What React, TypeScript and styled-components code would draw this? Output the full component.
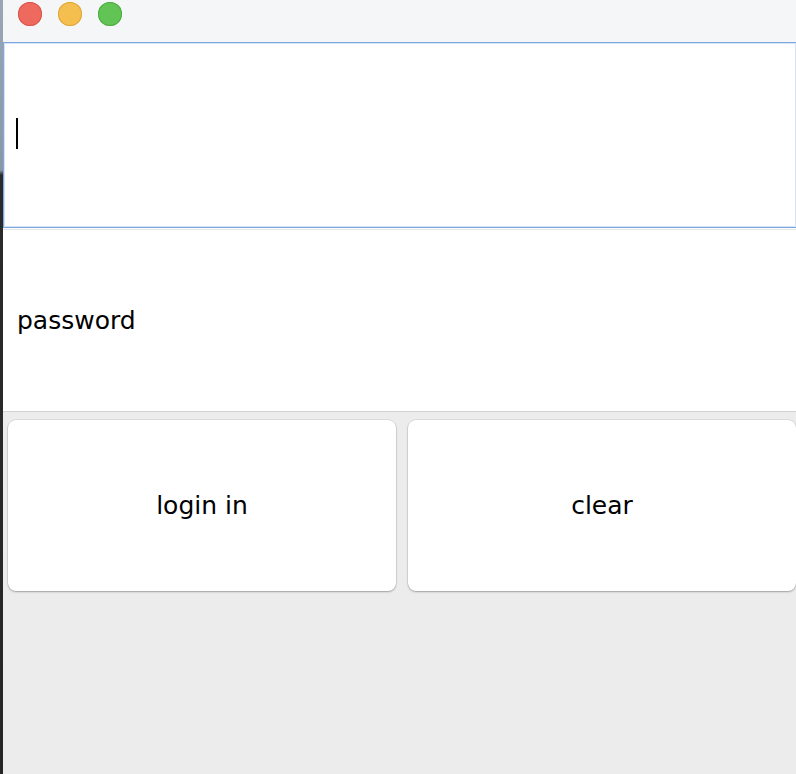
import React from "react";
import styled, { createGlobalStyle } from "styled-components";

const Global = createGlobalStyle`
  html, body { margin: 0; padding: 0; }
  body { width: 796px; height: 774px; overflow: hidden; background: #ececec; font-family: "DejaVu Sans", "Liberation Sans", sans-serif; }
`;

const Screen = styled.div`
  display: flex;
  width: 796px;
  height: 774px;
  overflow: hidden;
`;

const LeftEdge = styled.div`
  width: 3px;
  flex: none;
  background: linear-gradient(to bottom, #9aa6b4 0px, #8d97a3 170px, #2b2b2b 175px, #262626 100%);
`;

const Window = styled.div`
  flex: 1;
  display: flex;
  flex-direction: column;
  background: #ececec;
  min-width: 0;
`;

const TitleBar = styled.div`
  height: 42px;
  flex: none;
  display: flex;
  align-items: flex-start;
  gap: 16px;
  padding: 2px 0 0 15px;
  background: #f5f6f8;
  box-sizing: border-box;
`;

const Light = styled.span<{ $fill: string; $edge: string }>`
  width: 24px;
  height: 24px;
  border-radius: 50%;
  background: ${(p) => p.$fill};
  box-shadow: inset 0 0 0 1px ${(p) => p.$edge};
  flex: none;
`;

const UserField = styled.div`
  height: 186px;
  flex: none;
  box-sizing: border-box;
  border: 1px solid #7ca8dd;
  border-right: none;
  box-shadow: inset 0 0 0 1px #d4e3f5;
  background: #ffffff;
  display: flex;
  align-items: center;
  padding-left: 12px;
`;

const Caret = styled.span`
  width: 2px;
  height: 31px;
  background: #000;
  margin-top: -3px;
`;

const Divider = styled.div<{ $color: string; $h: number }>`
  height: ${(p) => p.$h}px;
  flex: none;
  background: ${(p) => p.$color};
`;

const PasswordField = styled.div`
  height: 181px;
  flex: none;
  background: #ffffff;
  display: flex;
  align-items: center;
  padding-left: 14px;
  font-size: 25px;
  color: #000;
`;

const ButtonPanel = styled.div`
  flex: 1;
  display: flex;
  gap: 12px;
  padding: 8px 0 0 5px;
  background: #ececec;
  border-top: 1px solid #d2d2d2;
  align-items: flex-start;
`;

const Button = styled.button`
  width: 388px;
  height: 171px;
  flex: none;
  border: none;
  border-radius: 8px;
  background: #ffffff;
  box-shadow: 0 0 0 0.5px rgba(0, 0, 0, 0.12), 0 1px 2px rgba(0, 0, 0, 0.28);
  font-family: "DejaVu Sans", "Liberation Sans", sans-serif;
  font-size: 25px;
  color: #000;
  display: flex;
  align-items: center;
  justify-content: center;
  padding: 0;
`;

export default function App() {
  return (
    <Screen>
      <Global />
      <LeftEdge />
      <Window>
        <TitleBar>
          <Light $fill="#ee6a5f" $edge="#d9564b" />
          <Light $fill="#f5bf4f" $edge="#dea63a" />
          <Light $fill="#61c454" $edge="#4eab41" />
        </TitleBar>
        <UserField>
          <Caret />
        </UserField>
        <Divider $color="#ffffff" $h={1} />
        <Divider $color="#e6e6e6" $h={1} />
        <PasswordField>password</PasswordField>
        <ButtonPanel>
          <Button>login in</Button>
          <Button>clear</Button>
        </ButtonPanel>
      </Window>
    </Screen>
  );
}
